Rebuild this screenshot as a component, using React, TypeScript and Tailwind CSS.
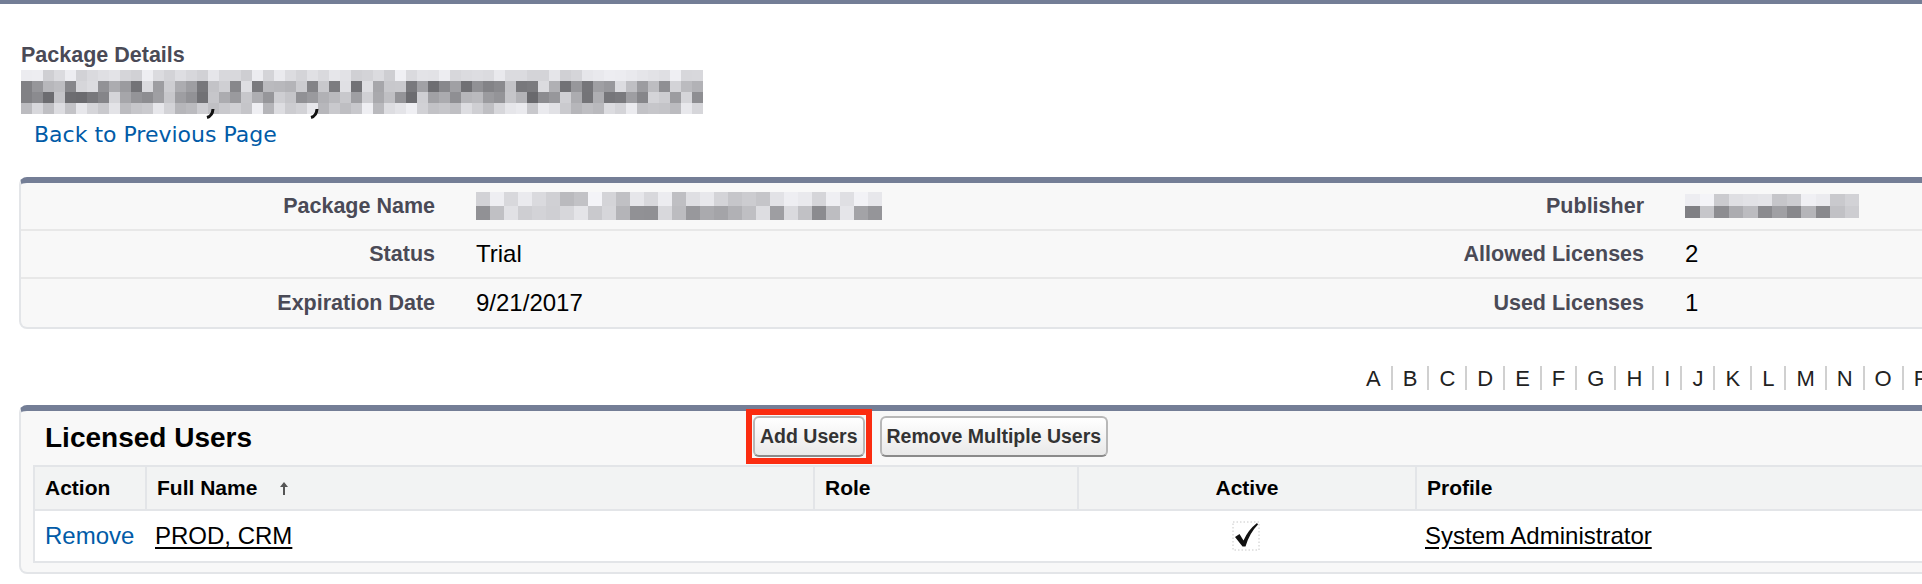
import React from 'react';
import clsx from 'clsx';

// deterministic noise for the pixelated (redacted) text
const makeRng = (seed: number) => {
  let s = seed;
  return () => {
    s = (s * 9301 + 49297) % 233280;
    return s / 233280;
  };
};

type MosaicProps = {
  cols: number;
  ranges: [number, number][];
  seed: number;
  cellClass: string;
  className?: string;
};

const Mosaic: React.FC<MosaicProps> = ({ cols, ranges, seed, cellClass, className }) => {
  const rnd = makeRng(seed);
  return (
    <div className={clsx('flex flex-col', className)}>
      {ranges.map(([lo, hi], r) => (
        <div key={r} className="flex">
          {Array.from({ length: cols }).map((_, c) => {
            const v = Math.round(lo + rnd() * (hi - lo));
            return (
              <div
                key={c}
                className={cellClass}
                style={{ backgroundColor: `rgb(${v},${v},${Math.min(255, v + 4)})` }}
              />
            );
          })}
        </div>
      ))}
    </div>
  );
};

const Label: React.FC<{ children: React.ReactNode }> = ({ children }) => (
  <div className="text-right pr-[20px] font-bold text-[21.5px] text-[#4a4a56]">{children}</div>
);

const Value: React.FC<{ children?: React.ReactNode }> = ({ children }) => (
  <div className="pl-[21px] text-[24px] text-black">{children}</div>
);

const SortArrow = () => (
  <svg width="10" height="15" viewBox="0 0 10 15" className="inline-block ml-[22px]">
    <path d="M5 1 L9 6 L6 6 L6 14 L4 14 L4 6 L1 6 Z" fill="#555" />
  </svg>
);

const CheckImg = () => (
  <svg width="28" height="30" viewBox="0 0 28 30">
    <rect x="1" y="1" width="26" height="28" fill="none" stroke="#c8c8c8" strokeDasharray="1.5 2" />
    <path d="M3 16 L7.5 13 L11.5 19.5 Q16 9 25 2 L26 3.5 Q17.5 12 13.5 25.5 L10.5 25.5 Z" fill="#111" />
  </svg>
);

// tails of the letters peeking out under the pixelated title
const Tail = ({ className }: { className: string }) => (
  <svg width="10" height="10" viewBox="0 0 10 10" className={clsx('absolute', className)}>
    <path d="M8 0 Q7.5 7 2 8.5" fill="none" stroke="#111" strokeWidth="3" />
  </svg>
);

const letters = ['A', 'B', 'C', 'D', 'E', 'F', 'G', 'H', 'I', 'J', 'K', 'L', 'M', 'N', 'O', 'P'];

const btn =
  'h-[41px] px-[5px] rounded-[6px] border-2 border-[#b8b8b8] border-b-[#8a8a8a] bg-linear-to-b from-white to-[#e9e9e9] text-[19.5px] font-bold text-[#333]';

export default function App() {
  return (
    <div className="w-[1922px] h-[584px] overflow-hidden bg-white font-['Liberation_Sans',Arial,sans-serif]">
      <div className="h-[4px] bg-[#737e96]" />

      {/* page title */}
      <div className="pl-[21px]">
        <div className="mt-[39px] leading-[24px] text-[21.5px] font-bold text-[#4a4a56]">Package Details</div>
        <div className="relative mt-[3px] w-fit">
          <Mosaic
            cols={62}
            seed={17}
            cellClass="w-[11px] h-[11px]"
            ranges={[
              [205, 240],
              [110, 225],
              [105, 215],
              [180, 240],
            ]}
          />
          <Tail className="left-[184px] top-[39px]" />
          <Tail className="left-[288px] top-[39px]" />
        </div>
        <a className="block mt-[8px] ml-[13px] leading-[26px] text-[22px] text-[#015ba7] font-['DejaVu_Sans',Verdana,sans-serif]">
          Back to Previous Page
        </a>
      </div>

      {/* detail panel */}
      <div className="ml-[19px] mt-[29px] w-[2450px] bg-[#f8f8f8] border-2 border-t-[6px] border-[#e3e5e8] border-t-[#747e96] rounded-[8px]">
        <div className="grid grid-cols-[434px_771px_438px_771px] h-[48px] items-center border-b-2 border-[#e8e8e8]">
          <Label>Package Name</Label>
          <Value>
            <Mosaic
              cols={29}
              seed={5}
              cellClass="w-[14px] h-[14px]"
              ranges={[
                [185, 245],
                [130, 235],
              ]}
            />
          </Value>
          <Label>Publisher</Label>
          <Value>
            <Mosaic
              cols={12}
              seed={41}
              cellClass="w-[14.5px] h-[12px]"
              ranges={[
                [195, 245],
                [110, 215],
              ]}
            />
          </Value>
        </div>
        <div className="grid grid-cols-[434px_771px_438px_771px] h-[48px] items-center border-b-2 border-[#e8e8e8]">
          <Label>Status</Label>
          <Value>Trial</Value>
          <Label>Allowed Licenses</Label>
          <Value>2</Value>
        </div>
        <div className="grid grid-cols-[434px_771px_438px_771px] h-[48px] items-center">
          <Label>Expiration Date</Label>
          <Value>9/21/2017</Value>
          <Label>Used Licenses</Label>
          <Value>1</Value>
        </div>
      </div>

      {/* rolodex */}
      <div className="flex items-center h-[30px] mt-[34px] pl-[1356px] text-[22px] text-[#222] whitespace-nowrap">
        {letters.map((l, i) => (
          <React.Fragment key={l}>
            {i > 0 && <span className="shrink-0 w-[2px] h-[24px] bg-[#d0d0d0]" />}
            <span className="shrink-0 px-[10px]">{l}</span>
          </React.Fragment>
        ))}
      </div>

      {/* licensed users */}
      <div className="ml-[19px] mt-[12px] w-[2450px] bg-[#f8f8f8] border-2 border-t-[6px] border-[#e3e5e8] border-t-[#747e96] rounded-[8px]">
        <div className="flex h-[54px] items-center">
          <div className="w-[732px] pl-[24px] text-[28px] font-bold text-black">Licensed Users</div>
          <div className="flex self-start mt-[5px]">
            <span className="relative">
              <button className={btn}>Add Users</button>
              <span className="absolute -inset-[7px] border-[6px] border-[#fb2c10] pointer-events-none" />
            </span>
            <button className={clsx(btn, 'ml-[15px]')}>Remove Multiple Users</button>
          </div>
        </div>

        <div className="ml-[12px] border-2 border-r-0 border-[#e3e5e8] bg-white">
          <div className="grid grid-cols-[110px_668px_264px_338px_1fr] h-[44px] bg-[#f2f3f3] border-b-2 border-[#e3e5e8] text-[21px] font-bold text-black">
            <div className="flex items-center pl-[10px]">Action</div>
            <div className="flex items-center pl-[10px] border-l-2 border-[#e3e5e8]">
              Full Name
              <SortArrow />
            </div>
            <div className="flex items-center pl-[10px] border-l-2 border-[#e3e5e8]">Role</div>
            <div className="flex items-center justify-center border-l-2 border-[#e3e5e8]">Active</div>
            <div className="flex items-center pl-[10px] border-l-2 border-[#e3e5e8]">Profile</div>
          </div>
          <div className="grid grid-cols-[110px_668px_264px_338px_1fr] h-[50px] items-center text-[24px] text-black">
            <div className="pl-[10px]">
              <a className="text-[#015ba7]">Remove</a>
            </div>
            <div className="pl-[10px]">
              <a className="underline underline-offset-[3px]">PROD, CRM</a>
            </div>
            <div />
            <div className="flex justify-center">
              <CheckImg />
            </div>
            <div className="pl-[10px]">
              <a className="underline underline-offset-[3px]">System Administrator</a>
            </div>
          </div>
        </div>
        <div className="h-[9px]" />
      </div>
    </div>
  );
}
